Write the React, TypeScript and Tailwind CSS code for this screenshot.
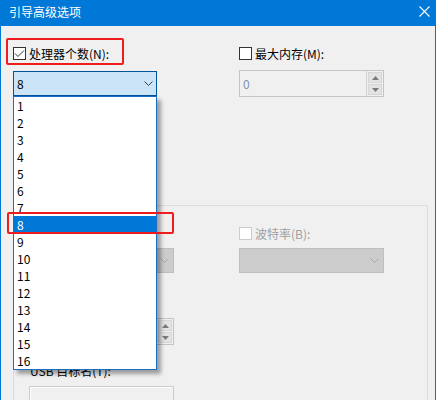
import React from "react";

function CheckBox({ checked = false, disabled = false }: { checked?: boolean; disabled?: boolean }) {
  return (
    <span
      className={
        disabled
          ? "w-[13px] h-[13px] border border-[#cccccc] bg-white flex items-center justify-center shrink-0"
          : "w-[13px] h-[13px] border border-[#333333] bg-white flex items-center justify-center shrink-0"
      }
    >
      {checked && (
        <svg width="11" height="11" viewBox="0 0 11 11">
          <path d="M1 5.5 L4 8.5 L10 2.5" stroke="#333333" strokeWidth="1" fill="none" />
        </svg>
      )}
    </span>
  );
}

function CheckRow({ label, checked, disabled }: { label: string; checked?: boolean; disabled?: boolean }) {
  return (
    <div className="h-[13px] flex items-center gap-[3px]">
      <CheckBox checked={checked} disabled={disabled} />
      <span
        className={
          disabled
            ? "text-[12px] leading-[13px] text-[#a0a0a0] whitespace-nowrap"
            : "text-[12px] leading-[13px] text-[#000000] whitespace-nowrap"
        }
      >
        {label}
      </span>
    </div>
  );
}

function Chevron({ color }: { color: string }) {
  return (
    <svg width="9" height="5" viewBox="0 0 9 5">
      <path d="M0.5 0.5 L4.5 4.5 L8.5 0.5" stroke={color} strokeWidth="1" fill="none" />
    </svg>
  );
}

function SpinBox({ value }: { value?: string }) {
  return (
    <div className="h-[27px] border border-[#c4c4c4] bg-[#f0f0f0] flex">
      <div className="flex-1 pl-[3px] flex items-center text-[12px] text-[#7f92ab]">{value}</div>
      <div className="w-[17px] flex flex-col gap-[1px] p-[1px] bg-[#f0f0f0] border-l border-[#d4d4d4]">
        <div className="flex-1 bg-[#e3e3e3] border border-[#d6d6d6] flex items-center justify-center">
          <svg width="7" height="4" viewBox="0 0 7 4">
            <path d="M0 4 L3.5 0 L7 4 Z" fill="#7a7a7a" />
          </svg>
        </div>
        <div className="flex-1 bg-[#e3e3e3] border border-[#d6d6d6] flex items-center justify-center">
          <svg width="7" height="4" viewBox="0 0 7 4">
            <path d="M0 0 L3.5 4 L7 0 Z" fill="#7a7a7a" />
          </svg>
        </div>
      </div>
    </div>
  );
}

function DisabledCombo() {
  return (
    <div className="h-[25px] border border-[#bfbfbf] bg-[#cccccc] flex items-center justify-end pr-[4px]">
      <Chevron color="#a6a6a6" />
    </div>
  );
}

const items = Array.from({ length: 16 }, (_, i) => String(i + 1));

export default function App() {
  return (
    <div className="w-[436px] h-[400px] relative overflow-hidden bg-[#f0f0f0] border-x border-[#0078d7] font-['Noto_Sans_CJK_SC',sans-serif]">
      {/* title bar */}
      <div className="h-[26px] bg-[#0078d7] flex items-center justify-between pl-[8px] pr-[5px] pb-[3px]">
        <span className="text-[12px] leading-none text-white">引导高级选项</span>
        <svg width="11" height="11" viewBox="0 0 11 11">
          <path d="M0.5 0.5 L10.5 10.5 M10.5 0.5 L0.5 10.5" stroke="#ffffff" strokeWidth="1.1" />
        </svg>
      </div>

      {/* body */}
      <div className="pl-[12px] flex flex-col">
        <div className="flex gap-[82px]">
          {/* left column */}
          <div className="w-[144px] flex flex-col">
            <div className="mt-[21px]">
              <CheckRow label="处理器个数(N):" checked />
            </div>
            <div className="relative mt-[11px]">
              <div className="h-[25px] border border-[#005499] bg-[#cce4f7] flex items-center justify-between pl-[3px] pr-[3px]">
                <span className="text-[12px] text-black">8</span>
                <Chevron color="#404040" />
              </div>
              {/* open dropdown list */}
              <div className="absolute left-0 top-full z-10 w-[144px] h-[274px] bg-white border border-[#1a6fc4] shadow-[4px_4px_4px_rgba(0,0,0,0.35)] flex flex-col">
                {items.map((n) => (
                  <div
                    key={n}
                    className={
                      n === "8"
                        ? "h-[17px] shrink-0 pl-[3px] flex items-center text-[12px] bg-[#0078d7] text-white"
                        : "h-[17px] shrink-0 pl-[3px] flex items-center text-[12px] text-black"
                    }
                  >
                    {n}
                  </div>
                ))}
              </div>
            </div>
          </div>
          {/* right column */}
          <div className="w-[145px] flex flex-col">
            <div className="mt-[21px]">
              <CheckRow label="最大内存(M):" />
            </div>
            <div className="mt-[10px]">
              <SpinBox value="0" />
            </div>
          </div>
        </div>

        {/* checkboxes hidden behind the open list */}
        <div className="flex flex-col">
          <div className="mt-[20px]">
            <CheckRow label="PCI 锁定(P)" />
          </div>
          <div className="mt-[16px]">
            <CheckRow label="调试(D)" />
          </div>
        </div>

        {/* group box */}
        <div className="mt-[46px] w-[415px] h-[220px] border border-[#dcdcdc] pl-[15px]">
          <div className="flex gap-[65px]">
            <div className="w-[145px] flex flex-col">
              <div className="mt-[21px]">
                <CheckRow label="调试端口(P):" disabled />
              </div>
              <div className="mt-[8px]">
                <DisabledCombo />
              </div>
              <div className="mt-[24px]">
                <CheckRow label="通道(C):" disabled />
              </div>
              <div className="mt-[8px]">
                <SpinBox />
              </div>
              <div className="mt-[18px] pl-[1px] text-[12px] leading-[16px] text-black">USB 目标名(T):</div>
              <div className="mt-[7px] h-[23px] border border-[#cccccc] bg-[#f0f0f0] shadow-[inset_1px_1px_0_#ffffff]"></div>
            </div>
            <div className="w-[145px] flex flex-col">
              <div className="mt-[21px]">
                <CheckRow label="波特率(B):" disabled />
              </div>
              <div className="mt-[8px]">
                <DisabledCombo />
              </div>
            </div>
          </div>
        </div>
      </div>

      {/* red annotation boxes */}
      <div className="absolute left-[5px] top-[38px] w-[118px] h-[27px] border-2 border-[#ee1c1c] rounded-[2px] z-20"></div>
      <div className="absolute left-[6px] top-[212px] w-[167px] h-[22px] border-2 border-[#ee1c1c] rounded-[2px] z-20"></div>
    </div>
  );
}
